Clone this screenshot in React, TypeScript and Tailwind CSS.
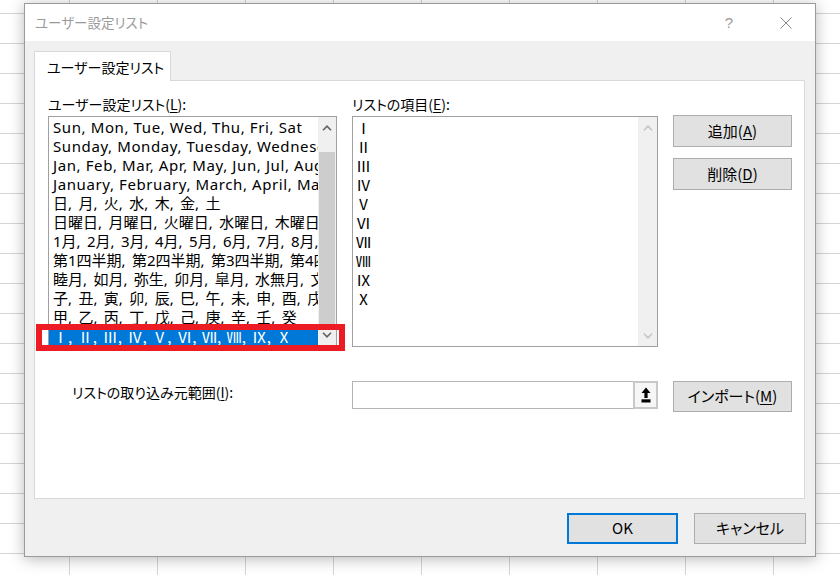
import React from "react";

const leftItems: { t: string; latin: boolean }[] = [
  { t: "Sun, Mon, Tue, Wed, Thu, Fri, Sat", latin: true },
  { t: "Sunday, Monday, Tuesday, Wednesday, Thursday, Friday, Saturday", latin: true },
  { t: "Jan, Feb, Mar, Apr, May, Jun, Jul, Aug, Sep, Oct, Nov, Dec", latin: true },
  { t: "January, February, March, April, May, June, July, August, September, October, November, December", latin: true },
  { t: "日, 月, 火, 水, 木, 金, 土", latin: false },
  { t: "日曜日, 月曜日, 火曜日, 水曜日, 木曜日, 金曜日, 土曜日", latin: false },
  { t: "1月, 2月, 3月, 4月, 5月, 6月, 7月, 8月, 9月, 10月, 11月, 12月", latin: false },
  { t: "第1四半期, 第2四半期, 第3四半期, 第4四半期", latin: false },
  { t: "睦月, 如月, 弥生, 卯月, 皐月, 水無月, 文月, 葉月, 長月, 神無月, 霜月, 師走", latin: false },
  { t: "子, 丑, 寅, 卯, 辰, 巳, 午, 未, 申, 酉, 戌, 亥", latin: false },
  { t: "甲, 乙, 丙, 丁, 戊, 己, 庚, 辛, 壬, 癸", latin: false },
];

const romans = ["Ⅰ", "Ⅱ", "Ⅲ", "Ⅳ", "Ⅴ", "Ⅵ", "Ⅶ", "Ⅷ", "Ⅸ", "Ⅹ"];

function Chevron({ up, color }: { up: boolean; color: string }) {
  return (
    <svg width="10" height="6" viewBox="0 0 10 6">
      <path
        d={up ? "M1 5.2 L5 1.2 L9 5.2" : "M1 0.8 L5 4.8 L9 0.8"}
        fill="none"
        stroke={color}
        strokeWidth="1.6"
      />
    </svg>
  );
}

function ScrollBar({ enabled, w }: { enabled: boolean; w: string }) {
  const c = enabled ? "#606060" : "#c5c5c5";
  return (
    <div className={`${w} h-full bg-[#f0f0f0] flex flex-col shrink-0`}>
      <div className="h-[21px] flex items-center justify-center">
        <Chevron up color={c} />
      </div>
      <div className="flex-1 flex flex-col">
        {enabled && <div className="mt-[14px] h-[172px] mx-[1px] bg-[#cdcdcd]" />}
      </div>
      <div className="h-[20px] flex items-center justify-center">
        <Chevron up={false} color={c} />
      </div>
    </div>
  );
}

function Btn({
  children,
  w,
  h,
  primary,
}: {
  children: React.ReactNode;
  w: string;
  h: string;
  primary?: boolean;
}) {
  return (
    <div
      className={`${w} ${h} flex items-center justify-center bg-[#e1e1e1] text-[15px] text-black whitespace-nowrap ${
        primary ? "border-2 border-[#0078d7]" : "border border-[#adadad]"
      }`}
    >
      {children}
    </div>
  );
}

export default function App() {
  const ui = "font-['Noto_Sans_CJK_JP',sans-serif] [font-feature-settings:'palt']";
  const list = "font-['Noto_Sans','Noto_Sans_CJK_JP',sans-serif] [font-feature-settings:normal]";
  return (
    <div className="relative w-[840px] h-[575px] overflow-hidden bg-white bg-[linear-gradient(to_right,#d4d4d4_1px,transparent_1px),linear-gradient(to_bottom,#d4d4d4_1px,transparent_1px)] bg-[size:88px_30px] bg-[position:69px_13px] pt-[3px] pl-[24px]">
      <div className={`w-[792px] h-[554px] border border-[#9a9a9a] bg-[#f0f0f0] flex flex-col shadow-[0_2px_14px_rgba(0,0,0,0.28)] ${ui}`}>
        {/* title bar */}
        <div className="h-[37px] bg-white flex items-center pl-[10px] shrink-0">
          <span className="text-[13.5px] text-[#9a9a9a] leading-none whitespace-nowrap">ユーザー設定リスト</span>
          <div className="flex-1" />
          <span className="w-[20px] text-center text-[15px] text-[#9a9a9a] leading-none font-['Liberation_Sans',sans-serif]">?</span>
          <svg className="ml-[41px] mr-[23px]" width="12" height="12" viewBox="0 0 12 12">
            <path d="M0.5 0.5 L11.5 11.5 M11.5 0.5 L0.5 11.5" stroke="#8a8a8a" strokeWidth="1" />
          </svg>
        </div>
        {/* client */}
        <div className="flex-1 flex flex-col pt-[10px] pl-[9px] pr-[10px]">
          <div className="flex">
            <div className="w-[137px] h-[30px] bg-white border border-b-0 border-[#d9d9d9] -mb-px relative z-10 flex items-center pl-[12px] pt-[2px] text-[14px] text-black whitespace-nowrap">
              ユーザー設定リスト
            </div>
          </div>
          <div className="w-[771px] h-[419px] bg-white border border-[#d9d9d9] pt-[14px] pl-[13px] flex flex-col">
            <div className="flex items-start">
              {/* left column */}
              <div className="w-[289px] flex flex-col">
                <div className="h-[21px] leading-[18px] text-[14px] text-black whitespace-nowrap">
                  ユーザー設定リスト(<span className="underline underline-offset-2">L</span>):
                </div>
                <div className="h-[230px] border border-[#a0a0a0] flex overflow-hidden">
                  <div className={`flex-1 min-w-0 overflow-hidden pt-[1px] ${list}`}>
                    {leftItems.map((it) => (
                      <div
                        key={it.t}
                        className={`h-[19px] leading-[19px] pl-[4px] whitespace-nowrap text-[15px] text-black ${
                          it.latin ? "tracking-[0.6px]" : "[word-spacing:2.5px]"
                        }`}
                      >
                        {it.t}
                      </div>
                    ))}
                    <div className="h-[19px] leading-[19px] pl-[4px] whitespace-nowrap text-[15px] text-white bg-[#0078d7] font-['Noto_Sans_CJK_JP',sans-serif] [word-spacing:2.3px]">
                      {romans.join(", ")}
                    </div>
                  </div>
                  <ScrollBar enabled w="w-[18px]" />
                </div>
              </div>
              {/* middle column */}
              <div className="w-[306px] ml-[15px] flex flex-col">
                <div className="h-[21px] leading-[18px] text-[14px] text-black whitespace-nowrap">
                  リストの項目(<span className="underline underline-offset-2">E</span>):
                </div>
                <div className="h-[231px] border border-[#a0a0a0] flex overflow-hidden">
                  <div className="flex-1 pt-[1px] font-['Noto_Sans_CJK_JP',sans-serif] [font-feature-settings:normal]">
                    {romans.map((r) => (
                      <div key={r} className="h-[19px] leading-[19px] pl-[3px] text-[15px] text-black">
                        {r}
                      </div>
                    ))}
                  </div>
                  <ScrollBar enabled={false} w="w-[19px]" />
                </div>
              </div>
              {/* right column */}
              <div className="ml-[15px] pt-[20px] flex flex-col gap-[11px]">
                <Btn w="w-[119px]" h="h-[32px]">
                  追加(<span className="underline underline-offset-2">A</span>)
                </Btn>
                <Btn w="w-[119px]" h="h-[32px]">
                  削除(<span className="underline underline-offset-2">D</span>)
                </Btn>
              </div>
            </div>
            {/* import row */}
            <div className="flex items-start mt-[34px]">
              <div className="w-[304px] pl-[24px] pt-[2px] leading-[18px] text-[14px] text-black whitespace-nowrap">
                リストの取り込み元範囲(<span className="underline underline-offset-2">I</span>):
              </div>
              <div className="w-[306px] h-[28px] border border-[#b4b4b4] bg-white flex justify-end">
                <div className="w-[25px] h-[28px] -mt-px -mr-px border-2 border-[#c8c8c8] bg-[#f6f6f6] flex items-center justify-center">
                  <svg width="10" height="16" viewBox="0 0 10 16">
                    <path d="M5 0.5 L9.5 6 L6.6 6 L6.6 11 L3.4 11 L3.4 6 L0.5 6 Z" fill="#000" />
                    <rect x="0.5" y="12.3" width="9" height="3.2" fill="#000" />
                  </svg>
                </div>
              </div>
              <div className="ml-[15px]">
                <Btn w="w-[119px]" h="h-[31px]">
                  インポート(<span className="underline underline-offset-2">M</span>)
                </Btn>
              </div>
            </div>
          </div>
          {/* bottom buttons */}
          <div className="flex justify-end gap-[16px] mt-[14px] -mr-[1px]">
            <Btn w="w-[111px]" h="h-[31px]" primary>
              OK
            </Btn>
            <Btn w="w-[112px]" h="h-[31px]">
              キャンセル
            </Btn>
          </div>
        </div>
      </div>
      {/* red annotation box */}
      <div className="absolute left-[36px] top-[324px] w-[309px] h-[27px] border-[6px] border-[#ed1c24]" />
    </div>
  );
}
